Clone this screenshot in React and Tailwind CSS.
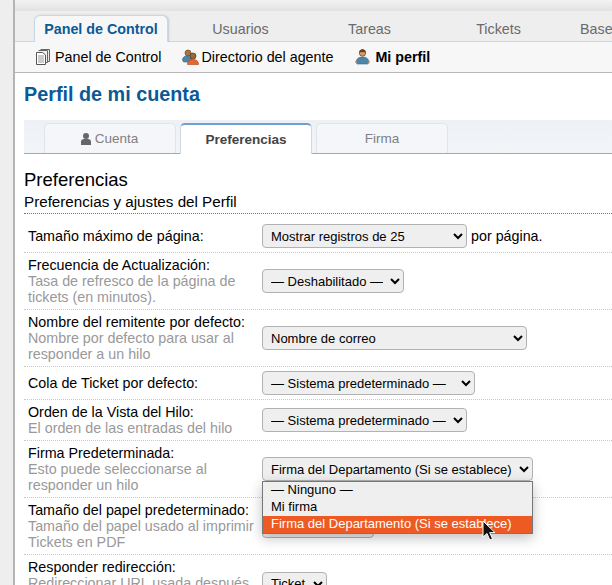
import React from 'react';

const DocIcon = () => (
  <svg width="16" height="16" viewBox="0 0 16 16" className="shrink-0">
    <path d="M5.500 .5h9v12h-2" fill="#e8e8e8" stroke="#666" />
    <path d="M3.500 1.500h9v12h-2" fill="#eee" stroke="#666" />
    <path d="M1.500 3.500h6l3 2.500v9.500h-9z" fill="#fff" stroke="#555" />
    <path d="M3 7h6M3 9h6M3 11h6M3 13h6" stroke="#999" />
  </svg>
);

const AgentsIcon = () => (
  <svg width="17" height="16" viewBox="0 0 17 16" className="shrink-0">
    <circle cx="6" cy="4" r="3" fill="#a8763e" stroke="#6b4423" strokeWidth=".7" />
    <path d="M.5 11c0-3 2-4 5-4s4 1 4 4l-1 2h-7z" fill="#4f86a8" stroke="#3a6380" strokeWidth=".6" />
    <circle cx="11" cy="7" r="3" fill="#9c6a3a" stroke="#4f3018" strokeWidth=".7" />
    <path d="M5.500 15.500c0-3.500 2-5 5.500-5s5.500 1.500 5.500 5z" fill="#e8682c" stroke="#a8481c" strokeWidth=".6" />
  </svg>
);

const UserIcon = () => (
  <svg width="15" height="16" viewBox="0 0 15 16" className="shrink-0">
    <circle cx="7.500" cy="4" r="3.200" fill="#d39a6a" stroke="#6b4423" strokeWidth=".7" />
    <path d="M4.300 3.500c0-2.500 1.500-3.200 3.200-3.200s3.200.7 3.200 3.200c-2-.8-4.400-.8-6.400 0z" fill="#6b3f1d" />
    <path d="M1 14c0-4 2.500-6 6.500-6s6.500 2 6.500 6l-1 1h-11z" fill="#4f86a8" stroke="#3a6380" strokeWidth=".6" />
    <path d="M.5 12.500l1.500 2.500M14.500 12.500l-1.500 2.500" stroke="#d39a6a" strokeWidth="1.200" />
  </svg>
);

const Cursor = () => (
  <svg width="15" height="22" viewBox="0 0 15 22" className="absolute left-[482px] top-[520px]">
    <path d="M1 1v16l4-3.500 2.800 6.500 2.700-1.200-2.800-6.200h5.300z" fill="#111" stroke="#fff" strokeWidth="1" />
  </svg>
);

const Sel = ({ width, value, options }) => (
  <select
    defaultValue={value}
    style={{ width }}
    className="h-6 shrink-0 bg-[#efefef] border border-[#b2b2b2] rounded-[4px] text-[13px] text-black px-1"
  >
    {(options || [value]).map(o => <option key={o}>{o}</option>)}
  </select>
);

const rows = [
  { label: 'Frecuencia de Actualización:', hint: ['Tasa de refresco de la página de', 'tickets (en minutos).'], width: 142, value: '— Deshabilitado —' },
  { label: 'Nombre del remitente por defecto:', hint: ['Nombre por defecto para usar al', 'responder a un hilo'], width: 265, value: 'Nombre de correo' },
  { label: 'Cola de Ticket por defecto:', hint: [], width: 213, value: '— Sistema predeterminado —' },
  { label: 'Orden de la Vista del Hilo:', hint: ['El orden de las entradas del hilo'], width: 205, value: '— Sistema predeterminado —' },
  { label: 'Firma Predeterminada:', hint: ['Esto puede seleccionarse al', 'responder un hilo'], width: 271, value: 'Firma del Departamento (Si se establece)' },
  { label: 'Tamaño del papel predeterminado:', hint: ['Tamaño del papel usado al imprimir', 'Tickets en PDF'], width: 112, value: 'Letter' },
  { label: 'Responder redirección:', hint: ['Redireccionar URL usada después'], width: 65, value: 'Ticket', tall: true },
];

export default function App() {
  return (
    <div className="relative w-[612px] h-[585px] overflow-hidden bg-white text-black text-[14.3px] leading-4 font-['Liberation_Sans',Arial,sans-serif]">
      <div className="flex h-full">
        {/* gutter */}
        <div className="w-[13px] shrink-0 bg-[#eeeeee]" />
        <div className="w-[2px] shrink-0 bg-[#b4b4b4]" />

        <div className="flex-1 min-w-0 flex flex-col">
          <div className="h-[11px] shrink-0 bg-gradient-to-b from-[#f2f2f2] to-[#e2e2e2]" />

          {/* main nav */}
          <nav className="h-[31px] shrink-0 bg-[#eeeeee] border-b border-[#c8d8e6] flex items-end pl-[19px] whitespace-nowrap text-[#6a6a6a]">
            <div className="w-[134px] h-[27px] shrink-0 -mb-px bg-[#f7f7f7] border border-b-0 border-[#c8d8e6] rounded-t-[6px] shadow-[1px_0_2px_rgba(130,160,190,0.45)] flex items-center justify-center font-bold text-[#0a5a96]">
              Panel de Control
            </div>
            <div className="ml-2 flex h-[24px] shrink-0 items-center">
              <div className="w-[129px] shrink-0 text-center">Usuarios</div>
              <div className="w-[129px] shrink-0 text-center">Tareas</div>
              <div className="w-[129px] shrink-0 text-center">Tickets</div>
              <div className="pl-[17px]">Base</div>
            </div>
          </nav>

          {/* sub nav */}
          <div className="h-[31px] shrink-0 bg-[#f7f7f7] border-b border-[#b8b8b8] flex items-center pl-[20px] whitespace-nowrap">
            <DocIcon />
            <span className="ml-[4px]">Panel de Control</span>
            <span className="ml-[20px]"><AgentsIcon /></span>
            <span className="ml-[3px]">Directorio del agente</span>
            <span className="ml-[22px]"><UserIcon /></span>
            <span className="ml-[5px] font-bold">Mi perfil</span>
          </div>

          <div className="pl-[9px] flex-1 min-h-0">
            <h1 className="mt-[9px] text-[19.8px] leading-6 font-bold text-[#0a5a96]">Perfil de mi cuenta</h1>

            {/* tabs */}
            <div className="mt-[14px] h-[34px] bg-gradient-to-b from-[#edf1f6] to-[#f2f5f8] border-b border-[#a8a8a8] flex items-end pl-[20px] gap-1 text-[13.5px]">
              <div className="w-[132px] h-[30px] pr-[2px] bg-[#f4f6fa] border border-b-0 border-[#e0e4e8] rounded-t-[5px] flex items-center justify-center gap-[3px] text-[#808080]">
                <svg width="12" height="12" viewBox="0 0 12 12">
                  <circle cx="6" cy="3" r="3" fill="#666" />
                  <path d="M1 12V8.500C1 7 2.500 6 4 6h4c1.500 0 3 1 3 2.500V12z" fill="#666" />
                </svg>
                Cuenta
              </div>
              <div className="w-[132px] h-[31px] -mb-px bg-white border border-b-0 border-[#d0d8e0] border-t-2 border-t-[#6e9fd0] rounded-t-[5px] flex items-center justify-center font-bold text-[#444444]">
                Preferencias
              </div>
              <div className="w-[132px] h-[30px] bg-[#f4f6fa] border border-b-0 border-[#e0e4e8] rounded-t-[5px] flex items-center justify-center text-[#808080]">
                Firma
              </div>
            </div>

            <h2 className="mt-[16px] text-[18.5px] leading-5 font-normal">Preferencias</h2>
            <div className="mt-[4px] h-[20px] text-[15.2px] leading-4 border-b border-dotted border-[#777777]">Preferencias y ajustes del Perfil</div>

            {/* first row */}
            <div className="h-[39px] border-b border-dotted border-[#c8c8c8] flex items-center pt-[6px] pl-1">
              <div className="w-[234px] shrink-0">Tamaño máximo de página:</div>
              <Sel width={205} value="Mostrar registros de 25" />
              <span className="ml-[4px]">por página.</span>
            </div>

            {rows.map(r => (
              <div key={r.label} className={r.tall ? 'h-[57px] flex items-center py-1 pl-1' : 'border-b border-dotted border-[#c8c8c8] flex items-center py-1 pl-1'}>
                <div className={r.tall ? 'w-[234px] shrink-0 self-start whitespace-nowrap' : 'w-[234px] shrink-0 whitespace-nowrap'}>
                  <div>{r.label}</div>
                  {r.hint.map(h => <div key={h} className="text-[#999999]">{h}</div>)}
                </div>
                <Sel width={r.width} value={r.value} />
              </div>
            ))}
          </div>
        </div>
      </div>

      {/* open dropdown */}
      <div className="absolute left-[262px] top-[481px] w-[271px] border border-[#767676] bg-[#efefef] text-[13px] leading-4 shadow-[0_4px_12px_rgba(0,0,0,0.25)]">
        <div className="pl-2 h-[17px]">— Ninguno —</div>
        <div className="pl-2 h-[17px]">Mi firma</div>
        <div className="pl-2 h-[17px] bg-[#ee5a24] text-white">Firma del Departamento (Si se establece)</div>
      </div>
      <Cursor />
    </div>
  );
}
